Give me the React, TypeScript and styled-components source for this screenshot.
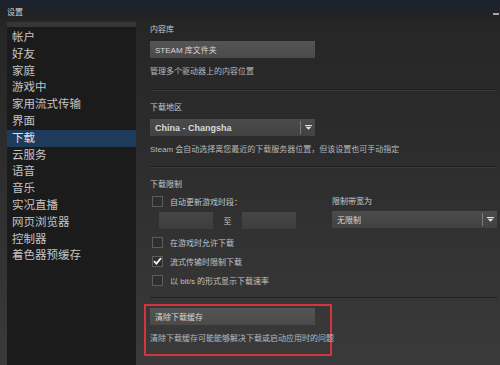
import styled, {createGlobalStyle} from "styled-components";

const GlobalStyle = createGlobalStyle`
    html, body {
        margin: 0;
        padding: 0;
        background: #262626;
    }
    * {
        box-sizing: border-box;
    }
`;

const FONT = `"Liberation Sans", "Noto Sans CJK SC", sans-serif`;

const navItems = [
    "帐户", "好友", "家庭", "游戏中", "家用流式传输", "界面", "下载",
    "云服务", "语音", "音乐", "实况直播", "网页浏览器", "控制器", "着色器预缓存",
];

function Arrow() {
    return (
        <svg width="7" height="5" viewBox="0 0 7 5">
            <rect x="0" y="0" width="7" height="1" fill="#e0e0e0"/>
            <path d="M0.5 1.8 H6.5 L3.5 4.8 Z" fill="#e0e0e0"/>
        </svg>
    );
}

function Check() {
    return (
        <svg width="9" height="8" viewBox="0 0 9 8">
            <path d="M1 4.2 L3.4 6.6 L8 1.2" stroke="#f2f2f2" strokeWidth="1.8" fill="none"/>
        </svg>
    );
}

function CheckOption({label, checked}: {label: string; checked?: boolean}) {
    return (
        <CheckRow>
            <Box>{checked && <Check/>}</Box>
            <CheckLabel>{label}</CheckLabel>
        </CheckRow>
    );
}

export default function App() {
    return (
        <>
            <GlobalStyle/>
            <Window>
                <TitleBar>
                    <Title>设置</Title>
                    <Minimize/>
                </TitleBar>
                <Body>
                    <Sidebar>
                        <SidebarTop/>
                        {navItems.map((item) => (
                            <NavItem key={item} $active={item === "下载"}>{item}</NavItem>
                        ))}
                    </Sidebar>
                    <Content>
                        <Label>内容库</Label>
                        <Button $top={6}>STEAM 库文件夹</Button>
                        <Desc $top={9}>管理多个驱动器上的内容位置</Desc>
                        <Divider $top={12}/>

                        <Label $top={12}>下载地区</Label>
                        <Select $top={6} $width={165}>
                            <SelectText $bold>China - Changsha</SelectText>
                            <SelectSep/>
                            <ArrowBox><Arrow/></ArrowBox>
                        </Select>
                        <Desc $top={9}>Steam 会自动选择离您最近的下载服务器位置，但该设置也可手动指定</Desc>
                        <Divider $top={11}/>

                        <Label $top={12}>下载限制</Label>
                        <LimitRow>
                            <LimitLeft>
                                <CheckOption label="自动更新游戏时段："/>
                                <TimeRow>
                                    <TimeInput/>
                                    <To>至</To>
                                    <TimeInput/>
                                </TimeRow>
                            </LimitLeft>
                            <LimitRight>
                                <Label $top={2}>限制带宽为</Label>
                                <Select $top={4} $width={165}>
                                    <SelectText>无限制</SelectText>
                                    <SelectSep/>
                                    <ArrowBox><Arrow/></ArrowBox>
                                </Select>
                            </LimitRight>
                        </LimitRow>
                        <CheckList>
                            <CheckOption label="在游戏时允许下载"/>
                            <CheckOption label="流式传输时限制下载" checked/>
                            <CheckOption label="以 bit/s 的形式显示下载速率"/>
                        </CheckList>
                        <Divider $top={11}/>

                        <Highlight>
                            <Button>清除下载缓存</Button>
                            <Desc $top={9}>清除下载缓存可能能够解决下载或启动应用时的问题</Desc>
                        </Highlight>
                    </Content>
                </Body>
            </Window>
        </>
    );
}

const Window = styled.div`
    width: 500px;
    height: 365px;
    display: flex;
    flex-direction: column;
    overflow: hidden;
    background: linear-gradient(180deg, #252525 0%, #2b2b2b 35%, #3a3a3a 100%);
    font-family: ${FONT};
`;

const TitleBar = styled.div`
    height: 20px;
    flex: none;
    display: flex;
    align-items: center;
    justify-content: space-between;
    padding: 2px 1px 0 7px;
    background: linear-gradient(180deg, #1c2230 0%, #202227 60%, #232323 100%);
`;

const Title = styled.span`
    font-size: 8px;
    color: #d4d4d4;
`;

const Minimize = styled.span`
    width: 6px;
    height: 2px;
    margin-top: 6px;
    background: #a8a8a8;
`;

const Body = styled.div`
    flex: 1;
    display: flex;
    min-height: 0;
`;

const Sidebar = styled.nav`
    width: 129px;
    margin: 2px 0 0 7px;
    flex: none;
    background: #1b1b1b;
    display: flex;
    flex-direction: column;
`;

const SidebarTop = styled.div`
    height: 5px;
    background: #363636;
    margin-bottom: 2px;
`;

const NavItem = styled.div<{$active?: boolean}>`
    height: 16.8px;
    line-height: 16.8px;
    padding-left: 5px;
    font-size: 11.5px;
    color: ${(p) => (p.$active ? "#e2e2e2" : "#c4c4c4")};
    background: ${(p) => (p.$active ? "#1f3b5c" : "transparent")};
`;

const Content = styled.main`
    flex: 1;
    padding: 5px 3px 0 14px;
    display: flex;
    flex-direction: column;
    align-items: flex-start;
`;

const Label = styled.div<{$top?: number}>`
    margin-top: ${(p) => p.$top ?? 0}px;
    font-size: 8px;
    line-height: 10px;
    color: #c8c8c8;
`;

const Desc = styled.div<{$top?: number}>`
    margin-top: ${(p) => p.$top ?? 0}px;
    font-size: 8px;
    line-height: 10px;
    color: #b8b8b8;
    white-space: nowrap;
`;

const Button = styled.div<{$top?: number}>`
    margin-top: ${(p) => p.$top ?? 0}px;
    width: 165px;
    height: 17px;
    padding-left: 5px;
    display: flex;
    align-items: center;
    font-size: 8px;
    color: #d6d6d6;
    background: linear-gradient(180deg, #555555 0%, #4a4a4a 100%);
`;

const Divider = styled.div<{$top?: number}>`
    margin-top: ${(p) => p.$top ?? 0}px;
    align-self: stretch;
    height: 2px;
    border-top: 1px solid #1f1f1f;
    border-bottom: 1px solid #393939;
`;

const Select = styled.div<{$top?: number; $width: number}>`
    margin-top: ${(p) => p.$top ?? 0}px;
    width: ${(p) => p.$width}px;
    height: 17px;
    display: flex;
    align-items: center;
    background: linear-gradient(180deg, #4b4b4b 0%, #424242 100%);
`;

const SelectText = styled.span<{$bold?: boolean}>`
    flex: 1;
    padding-left: 5px;
    font-size: ${(p) => (p.$bold ? 9 : 8)}px;
    font-weight: ${(p) => (p.$bold ? 700 : 400)};
    color: #dadada;
`;

const SelectSep = styled.span`
    width: 1px;
    height: 13px;
    background: #7a7a7a;
`;

const ArrowBox = styled.span`
    width: 14px;
    display: flex;
    justify-content: center;
    align-items: center;
`;

const LimitRow = styled.div`
    margin-top: 5px;
    display: flex;
    align-self: stretch;
`;

const LimitLeft = styled.div`
    width: 182px;
    display: flex;
    flex-direction: column;
`;

const LimitRight = styled.div`
    flex: 1;
    display: flex;
    flex-direction: column;
    align-items: stretch;
`;

const CheckRow = styled.div`
    display: flex;
    align-items: center;
    height: 12px;
    padding-left: 2px;
`;

const Box = styled.span`
    width: 11px;
    height: 11px;
    flex: none;
    display: flex;
    align-items: center;
    justify-content: center;
    border: 1px solid #5c5c5c;
    background: #2e2e2e;
`;

const CheckLabel = styled.span`
    margin-left: 7px;
    font-size: 8px;
    color: #c4c4c4;
    white-space: nowrap;
`;

const TimeRow = styled.div`
    margin-top: 5px;
    padding-left: 9px;
    display: flex;
    align-items: center;
`;

const TimeInput = styled.div`
    width: 54px;
    height: 17px;
    background: linear-gradient(180deg, #464646 0%, #3d3d3d 100%);
`;

const To = styled.span`
    width: 29px;
    text-align: center;
    font-size: 8px;
    color: #c4c4c4;
`;

const CheckList = styled.div`
    margin-top: 7px;
    display: flex;
    flex-direction: column;
    gap: 7px;
`;

const Highlight = styled.div`
    margin: 5px 0 0 -6px;
    width: 188px;
    padding: 2px 0 10px 4px;
    border: 2px solid #d4343e;
`;
